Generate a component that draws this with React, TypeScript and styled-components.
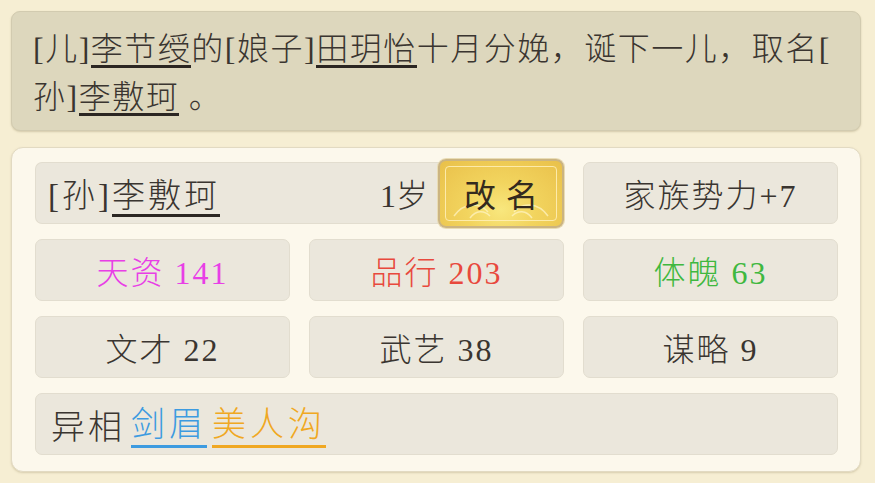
import React from "react";
import styled, { createGlobalStyle } from "styled-components";

const Global = createGlobalStyle`
  html, body { margin: 0; padding: 0; }
  body {
    width: 875px;
    height: 483px;
    overflow: hidden;
    background: #f6eed3;
    font-family: "Liberation Serif", "Noto Sans CJK SC", serif;
    color: #3a3530;
  }
`;

const Page = styled.div`
  box-sizing: border-box;
  width: 875px;
  height: 483px;
  padding: 11px 14px 11px 11px;
  display: flex;
  flex-direction: column;
  gap: 16px;
`;

const Story = styled.div`
  box-sizing: border-box;
  height: 120px;
  padding: 13px 20px 0 21px;
  background: #ddd7bd;
  border: 1px solid #d2cbb0;
  border-radius: 9px;
  box-shadow: 0 1px 2px rgba(150, 135, 95, 0.35);
  font-size: 32px;
  line-height: 48px;
  letter-spacing: 1.5px;
  white-space: nowrap;
  font-weight: 300;
`;

const Link = styled.span<{ $tight?: boolean }>`
  display: inline-block;
  line-height: ${(p) => (p.$tight ? "1em" : "1.1em")};
  border-bottom: 3px solid #2b2622;
  color: inherit;
`;

const Panel = styled.div`
  box-sizing: border-box;
  flex: 1;
  padding: 14px 23px 15px 23px;
  background: #fcf8ec;
  border: 1px solid #e2dac2;
  border-radius: 12px;
  box-shadow: 0 1px 2px rgba(160, 145, 105, 0.35);
  display: grid;
  grid-template-columns: repeat(3, 255px);
  grid-auto-rows: 62px;
  column-gap: 19px;
  row-gap: 15px;
`;

const Cell = styled.div<{ $color?: string }>`
  box-sizing: border-box;
  background: #ebe7dc;
  border: 1px solid #e2ddcf;
  border-radius: 7px;
  display: flex;
  align-items: center;
  justify-content: center;
  font-size: 32px;
  letter-spacing: 2px;
  font-weight: 300;
  color: ${(p) => p.$color ?? "#3a3530"};
  white-space: nowrap;
`;

const NameRow = styled.div`
  grid-column: span 2;
  display: flex;
  align-items: center;
`;

const NameBox = styled(Cell)`
  flex: 1;
  height: 62px;
  justify-content: space-between;
  padding: 0 12px 0 12px;
  border-top-right-radius: 0;
  border-bottom-right-radius: 0;
  border-right: none;
  font-size: 33px;
  letter-spacing: 3px;
`;

const Age = styled.span`
  font-size: 32px;
  letter-spacing: 0;
`;

const RenameButton = styled.button`
  position: relative;
  box-sizing: border-box;
  width: 126px;
  height: 69px;
  margin-left: -2px;
  border: 2px solid #cbb481;
  border-radius: 8px;
  background: radial-gradient(ellipse at 50% 75%, #f8e77e 0%, #f2d45e 40%, #e9c04a 100%);
  box-shadow: 0 0 0 1px #e9dcb4;
  font-family: "Liberation Serif", "Noto Sans CJK SC", serif;
  font-size: 32px;
  font-weight: 400;
  letter-spacing: 10px;
  padding: 0 0 0 10px;
  color: #342a1e;
  cursor: pointer;
  &::before {
    content: "";
    position: absolute;
    inset: 5px;
    border: 1.5px solid rgba(255, 240, 185, 0.85);
    border-radius: 4px;
  }
`;

const Ornament = styled.svg`
  position: absolute;
  left: 10px;
  bottom: 6px;
  width: 102px;
  height: 24px;
  pointer-events: none;
`;

const Label = styled.span`
  position: relative;
`;

const Wide = styled(Cell)`
  grid-column: span 3;
  justify-content: flex-start;
  padding-left: 15px;
  gap: 6px;
  font-size: 34px;
  letter-spacing: 3px;
`;

const Trait = styled.span<{ $color: string }>`
  color: ${(p) => p.$color};
  border-bottom: 3px solid ${(p) => p.$color};
  letter-spacing: 4px;
  line-height: 1.22;
`;

const Traits = styled.span`
  display: inline-flex;
  align-items: center;
  gap: 5px;
  padding-top: 4px;
`;

const stats = [
  { name: "天资", value: 141, color: "#e83fe6" },
  { name: "品行", value: 203, color: "#e8493d" },
  { name: "体魄", value: 63, color: "#3fb83f" },
  { name: "文才", value: 22 },
  { name: "武艺", value: 38 },
  { name: "谋略", value: 9 },
];

export default function App() {
  return (
    <>
      <Global />
      <Page>
        <Story>
          [儿]<Link $tight>李节绶</Link>的[娘子]<Link $tight>田玥怡</Link>十月分娩，诞下一儿，取名[
          <br />
          孙]<Link $tight>李敷珂</Link> 。
        </Story>
        <Panel>
          <NameRow>
            <NameBox>
              <span>
                [孙]<Link>李敷珂</Link>
              </span>
              <Age>1岁</Age>
            </NameBox>
            <RenameButton>
              <Ornament viewBox="0 0 102 24">
                <path
                  d="M4 20 C14 6, 30 6, 38 16 M64 16 C72 6, 88 6, 98 20 M20 22 C26 14, 34 14, 40 20 M62 20 C68 14, 76 14, 82 22"
                  fill="none"
                  stroke="rgba(255,245,200,0.7)"
                  strokeWidth="1.5"
                />
              </Ornament>
              <Label>改名</Label>
            </RenameButton>
          </NameRow>
          <Cell>家族势力+7</Cell>
          {stats.map((s) => (
            <Cell key={s.name} $color={s.color}>
              {s.name}&nbsp;{s.value}
            </Cell>
          ))}
          <Wide>
            <span>异相</span>
            <Traits>
              <Trait $color="#3d9be0">剑眉</Trait>
              <Trait $color="#f0a822">美人沟</Trait>
            </Traits>
          </Wide>
        </Panel>
      </Page>
    </>
  );
}
